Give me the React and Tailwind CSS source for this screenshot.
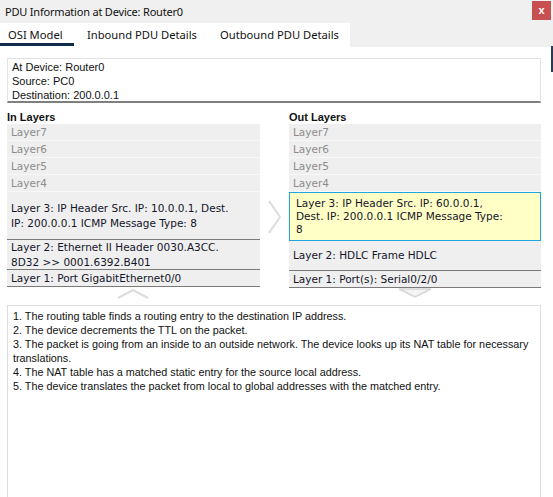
import React from "react";

const GREY = ["Layer7", "Layer6", "Layer5", "Layer4"];

function UpperRows() {
  return (
    <>
      {GREY.map((l) => (
        <div
          key={l}
          className="h-[17px] flex items-center pl-[4px] bg-[#efefef] border-b border-[#f8f8f8] text-[#8c8c8c]"
        >
          {l}
        </div>
      ))}
    </>
  );
}

export default function App() {
  return (
    <div
      className="w-[553px] h-[497px] bg-white overflow-hidden flex flex-col relative"
      style={{ fontFamily: '"Liberation Sans", Arial, sans-serif' }}
    >
      {/* title bar */}
      <div className="h-[23px] bg-[#f0f0f0] flex items-center justify-between pl-[5px] pr-[2px] shrink-0">
        <span
          className="text-[11px] tracking-[-0.2px] text-[#111] leading-none whitespace-nowrap"
          style={{ fontFamily: '"Noto Sans", sans-serif' }}
        >
          PDU Information at Device: Router0
        </span>
        <div className="w-[19px] h-[19px] bg-[#c75050] flex items-center justify-center text-white text-[11px] font-bold leading-none mt-[-2px]">
          x
        </div>
      </div>
      {/* tabs */}
      <div className="h-[24px] bg-[#f0f0f0] flex shrink-0">
        <div
          className="w-[350px] bg-white flex text-[11.2px] text-[#111] whitespace-nowrap"
          style={{ fontFamily: '"Noto Sans", sans-serif' }}
        >
          <div className="w-[74px] shrink-0 pl-[8px] pt-[4px] border-b-[3px] border-[#0f2a4d] h-[23px]">OSI Model</div>
          <div className="w-[146px] shrink-0 pl-[13px] pt-[4px]">Inbound PDU Details</div>
          <div className="shrink-0 pt-[4px]">Outbound PDU Details</div>
        </div>
        <div className="flex-1" />
      </div>

      <div className="flex-1 flex flex-col pl-[7px] pr-[12px] relative">
        {/* info box */}
        <div className="mt-[11px] h-[45px] border border-[#e3e3e3] border-b-[#7f7f7f] border-b-2 pl-[4px] pt-[1px] text-[11px] text-[#111] leading-[14px]">
          <div>At Device: Router0</div>
          <div>Source: PC0</div>
          <div>Destination: 200.0.0.1</div>
        </div>

        {/* layers */}
        <div className="mt-[8px] grid grid-cols-[253px_29px_252px] text-[11px]">
          <div className="font-bold text-[11px] text-[#111] h-[13px] leading-[13px]">In Layers</div>
          <div />
          <div className="font-bold text-[11px] text-[#111] h-[13px] leading-[13px]">Out Layers</div>

          <div
            className="flex flex-col leading-[15px]"
            style={{ fontFamily: '"DejaVu Sans", Verdana, sans-serif', fontSize: "10.5px" }}
          >
            <UpperRows />
            <div className="h-[48px] flex items-center pl-[4px] bg-[#efefef] border-b border-[#7a7a7a] text-[#15152a]">
              <div>
                Layer 3: IP Header Src. IP: 10.0.0.1, Dest.
                <br />
                IP: 200.0.0.1 ICMP Message Type: 8
              </div>
            </div>
            <div className="h-[30px] flex items-center pl-[4px] bg-[#efefef] border-b border-[#7a7a7a] text-[#15152a]">
              <div>
                Layer 2: Ethernet II Header 0030.A3CC.
                <br />
                8D32 &gt;&gt; 0001.6392.B401
              </div>
            </div>
            <div className="h-[17px] flex items-center pl-[4px] bg-[#efefef] border-b border-[#7a7a7a] text-[#15152a]">
              Layer 1: Port GigabitEthernet0/0
            </div>
          </div>

          <div className="flex justify-center pt-[76px]">
            <svg width="14" height="34" viewBox="0 0 14 34">
              <path d="M1 1 L12 17 L1 33" fill="none" stroke="#dcdcdc" strokeWidth="2" />
            </svg>
          </div>

          <div
            className="flex flex-col leading-[13px]"
            style={{ fontFamily: '"DejaVu Sans", Verdana, sans-serif', fontSize: "10.5px" }}
          >
            <UpperRows />
            <div className="h-[49px] flex items-center pl-[6px] bg-[#ffffc6] border border-[#1fa6e1] text-[#15152a]">
              <div>
                Layer 3: IP Header Src. IP: 60.0.0.1,
                <br />
                Dest. IP: 200.0.0.1 ICMP Message Type:
                <br />
                8
              </div>
            </div>
            <div className="h-[30px] flex items-center pl-[4px] bg-[#efefef] border-b border-[#7a7a7a] text-[#15152a]">
              Layer 2: HDLC Frame HDLC
            </div>
            <div className="h-[17px] flex items-center pl-[4px] bg-[#efefef] border-b border-[#7a7a7a] text-[#15152a]">
              Layer 1: Port(s): Serial0/2/0
            </div>
          </div>
        </div>

        {/* carets */}
        <div className="h-[17px] relative">
          <svg className="absolute left-[110px] top-[1px]" width="32" height="10" viewBox="0 0 32 10">
            <path d="M1 9 L16 1 L31 9" fill="none" stroke="#dcdcdc" strokeWidth="2" />
          </svg>
          <svg className="absolute left-[391px] top-[0px]" width="34" height="10" viewBox="0 0 34 10">
            <path d="M1 1 L17 9 L33 1 Z" fill="#f4f4f4" stroke="#d6d6d6" strokeWidth="1.5" />
          </svg>
        </div>

        {/* description box */}
        <div className="flex-1 border border-[#dedede] border-b-0 pl-[5px] pt-[3px] text-[10.8px] leading-[14px] text-[#111]">
          <div>1. The routing table finds a routing entry to the destination IP address.</div>
          <div>2. The device decrements the TTL on the packet.</div>
          <div>
            3. The packet is going from an inside to an outside network. The device looks up its NAT table for necessary
            translations.
          </div>
          <div>4. The NAT table has a matched static entry for the source local address.</div>
          <div>5. The device translates the packet from local to global addresses with the matched entry.</div>
        </div>
      </div>
      <div className="absolute right-0 top-[46px] w-[2px] h-[26px] bg-[#2a3b55]" />
    </div>
  );
}
